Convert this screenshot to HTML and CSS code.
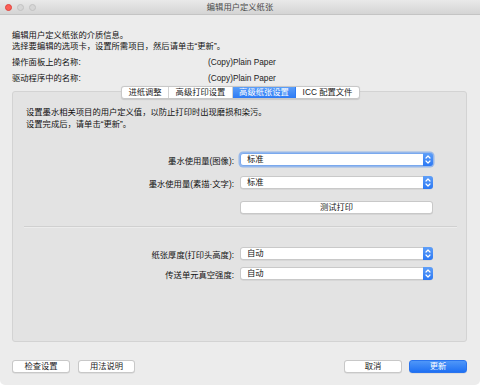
FILE: index.html
```html
<!DOCTYPE html>
<html lang="zh-CN">
<head>
<meta charset="utf-8">
<title>编辑用户定义纸张</title>
<link rel="stylesheet" href="styles.css">
</head>
<body>
<div class="window">
  <div class="titlebar">
    <div class="lights"><span class="light red"></span><span class="light"></span><span class="light"></span></div>
    <div class="title">编辑用户定义纸张</div>
    <div></div>
  </div>
  <div class="content">
    <p class="intro">编辑用户定义纸张的介质信息。<br>选择要编辑的选项卡，设置所需项目，然后请单击“更新”。</p>
    <div class="name-row first"><span class="name-label">操作面板上的名称:</span><span class="name-value">(Copy)Plain Paper</span></div>
    <div class="name-row"><span class="name-label">驱动程序中的名称:</span><span class="name-value">(Copy)Plain Paper</span></div>
    <div class="tabs">
      <span class="tab t1">进纸调整</span><span class="tab t2">高级打印设置</span><span class="tab t3 active">高级纸张设置</span><span class="tab t4">ICC 配置文件</span>
    </div>
    <div class="group">
      <p class="group-intro">设置墨水相关项目的用户定义值，以防止打印时出现磨损和染污。<br>设置完成后，请单击“更新”。</p>
      <div class="form-row r1">
        <span class="label">墨水使用量(图像):</span>
        <div class="select focused"><span class="sel-text">标准</span><span class="arrow"><svg width="10" height="13" viewBox="0 0 10 13"><path d="M3 5 L5 3 L7 5 M3 8 L5 10 L7 8" fill="none" stroke="#fff" stroke-width="1.2" stroke-linecap="round" stroke-linejoin="round"/></svg></span></div>
      </div>
      <div class="form-row r2">
        <span class="label">墨水使用量(素描·文字):</span>
        <div class="select"><span class="sel-text">标准</span><span class="arrow"><svg width="10" height="13" viewBox="0 0 10 13"><path d="M3 5 L5 3 L7 5 M3 8 L5 10 L7 8" fill="none" stroke="#fff" stroke-width="1.2" stroke-linecap="round" stroke-linejoin="round"/></svg></span></div>
      </div>
      <div class="form-row r3">
        <span class="label"></span>
        <button class="btn wide">测试打印</button>
      </div>
      <div class="sep"></div>
      <div class="form-row r4">
        <span class="label">纸张厚度(打印头高度):</span>
        <div class="select"><span class="sel-text">自动</span><span class="arrow"><svg width="10" height="13" viewBox="0 0 10 13"><path d="M3 5 L5 3 L7 5 M3 8 L5 10 L7 8" fill="none" stroke="#fff" stroke-width="1.2" stroke-linecap="round" stroke-linejoin="round"/></svg></span></div>
      </div>
      <div class="form-row r5">
        <span class="label">传送单元真空强度:</span>
        <div class="select"><span class="sel-text">自动</span><span class="arrow"><svg width="10" height="13" viewBox="0 0 10 13"><path d="M3 5 L5 3 L7 5 M3 8 L5 10 L7 8" fill="none" stroke="#fff" stroke-width="1.2" stroke-linecap="round" stroke-linejoin="round"/></svg></span></div>
      </div>
    </div>
    <div class="footer">
      <div class="btn-group"><button class="btn b1">检查设置</button><button class="btn b2">用法说明</button></div>
      <div class="btn-group right"><button class="btn b3">取消</button><button class="btn primary b4">更新</button></div>
    </div>
  </div>
</div>
</body>
</html>
```
FILE: styles.css
```css
* { box-sizing: border-box; }
html, body { margin: 0; padding: 0; background: #ffffff; }
body {
  font-family: "Liberation Sans", "Noto Sans CJK SC", sans-serif;
  font-size: 8.3px;
  color: #111;
}
.window {
  width: 480px;
  height: 385px;
  background: #ececec;
  border-radius: 0 0 5px 5px;
  overflow: hidden;
}
.titlebar {
  height: 15px;
  background: linear-gradient(#e9e9e9, #d4d4d4);
  border-bottom: 1px solid #c4c4c4;
  display: grid;
  grid-template-columns: 1fr auto 1fr;
  align-items: center;
}
.lights { display: flex; gap: 5px; padding-left: 5px; }
.light {
  width: 7px; height: 7px; border-radius: 50%;
  background: #d6d6d6;
  border: 0.5px solid #c2c2c2;
}
.light.red { background: #fc5f57; border-color: #e0443e; }
.title { color: #4a4a4a; font-size: 8.3px; line-height: 14px; }

.content { padding: 0 13px 0 12px; }
.intro { margin: 15px 0 0; line-height: 11px; }
.name-row { display: flex; line-height: 11px; }
.name-row.first { margin-top: 5px; }
.name-row + .name-row { margin-top: 5px; }
.name-label { width: 196px; }
.name-value { color: #222; }

.tabs {
  display: flex;
  width: 239px;
  height: 13px;
  margin: 2px 0 -8px 109px;
  position: relative;
  z-index: 1;
  background: #fff;
  border: 1px solid #c8c8c8;
  border-radius: 3px;
  box-shadow: 0 0.5px 1px rgba(0,0,0,0.12);
  overflow: hidden;
}
.tab {
  display: flex; align-items: center; justify-content: center;
  line-height: 11px;
  border-right: 1px solid #d2d2d2;
  color: #222;
}
.tab:last-child { border-right: none; }
.t1 { width: 47px; }
.t2 { width: 64px; }
.t3 { width: 63px; }
.t4 { flex: 1; }
.tab.active {
  background: linear-gradient(#5b9ef8, #2d7bf5);
  color: #fff;
  border-right-color: #2d7bf5;
}

.group {
  background: #e3e3e3;
  border: 1px solid #d3d3d3;
  border-radius: 3px;
  height: 251px;
  padding: 14px 0 0 13px;
}
.group-intro { margin: 0; line-height: 12px; }

.form-row {
  display: grid;
  grid-template-columns: 208px 193px;
  column-gap: 6px;
  align-items: center;
}
.form-row .label { text-align: right; }
.r1 { margin-top: 23px; }
.r2 { margin-top: 10px; }
.r3 { margin-top: 12px; }
.r4 { margin-top: 19px; }
.r5 { margin-top: 7px; }

.select {
  height: 13px;
  display: flex;
  align-items: center;
  background: #fff;
  border: 1px solid #c9c9c9;
  border-radius: 3px;
  box-shadow: 0 0.5px 0.5px rgba(0,0,0,0.1);
}
.select.focused {
  border-color: #7aa9ee;
  box-shadow: 0 0 0 1.5px rgba(90,150,240,0.55);
}
.sel-text { flex: 1; padding-left: 6px; line-height: 11px; }
.arrow {
  width: 10px;
  height: 13px;
  margin: -1px -1px -1px 0;
  border-radius: 0 3px 3px 0;
  background: linear-gradient(#5f9ff8, #2b78f4);
  display: flex; align-items: center; justify-content: center;
}
.arrow svg { display: block; }

.btn {
  font: inherit;
  color: #222;
  height: 13px;
  padding: 0;
  background: #fff;
  border: 1px solid #c8c8c8;
  border-radius: 3px;
  box-shadow: 0 0.5px 0.5px rgba(0,0,0,0.12);
  line-height: 11px;
}
.btn.wide { width: 193px; }

.sep {
  height: 2px;
  background: #d0d0d0;
  margin: 12px 9px 0 -2px;
  border-bottom: 1px solid #ececec;
}

.footer {
  display: flex;
  justify-content: space-between;
  margin-top: 18px;
}
.btn-group { display: flex; gap: 8px; }
.btn-group.right { gap: 7px; }
.b1 { width: 58px; }
.b2 { width: 57px; }
.b3 { width: 58px; }
.b4 { width: 58px; }
.btn.primary {
  background: linear-gradient(#4f97f8, #1f70f3);
  border-color: #2a74ee;
  color: #fff;
}
```
